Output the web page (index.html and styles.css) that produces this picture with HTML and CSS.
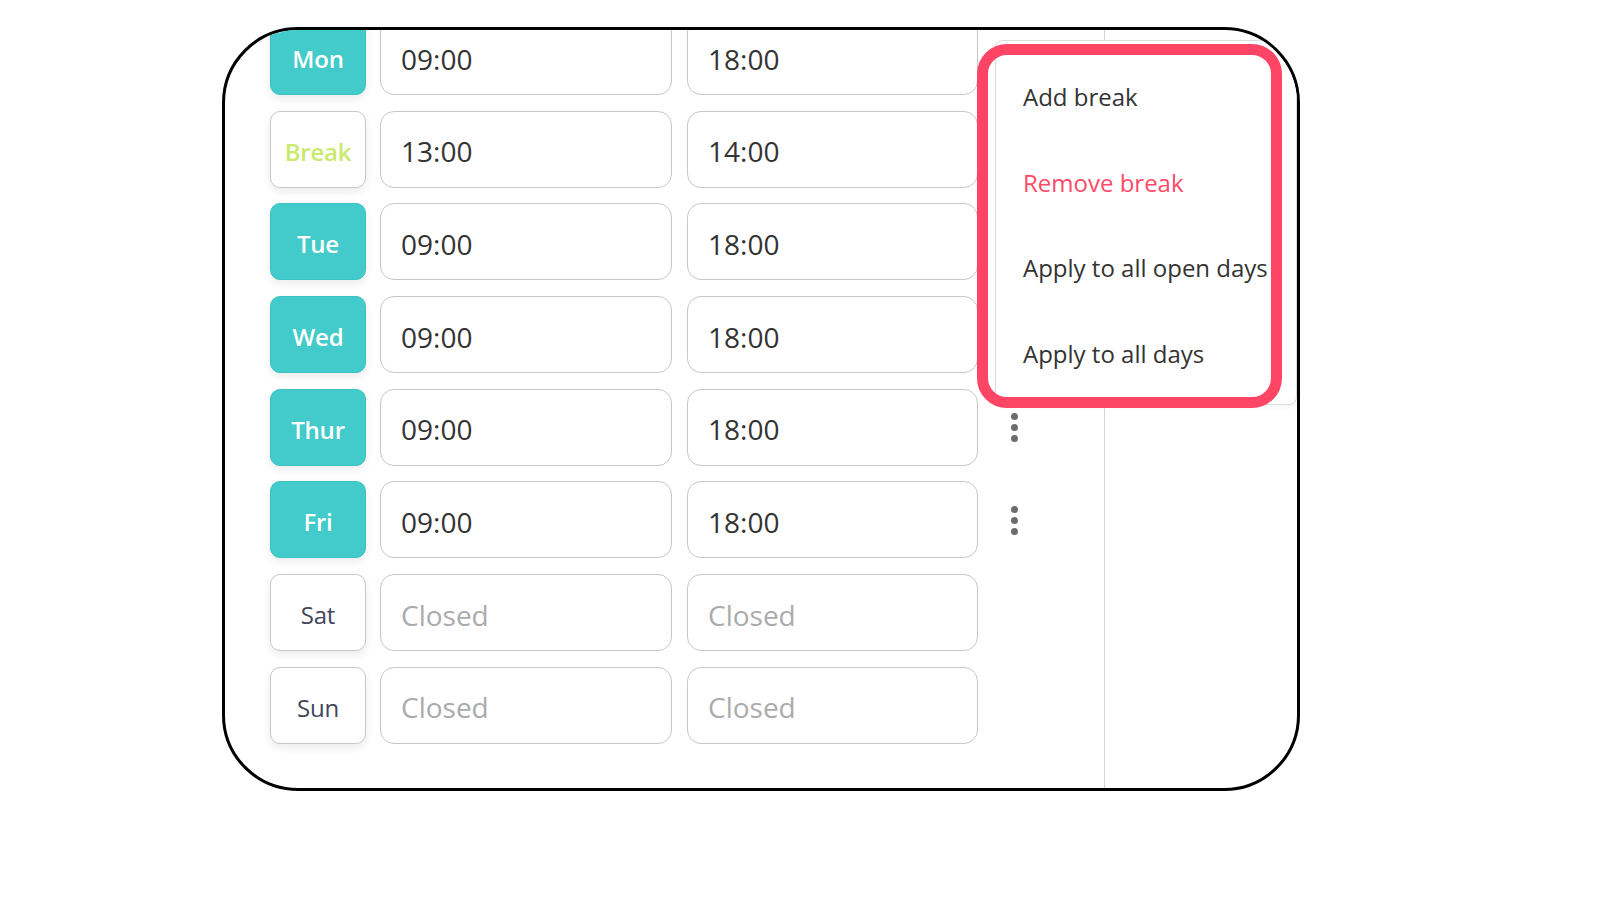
FILE: index.html
```html
<!DOCTYPE html>
<html lang="en">
<head>
<meta charset="utf-8">
<title>Opening hours</title>
<link rel="stylesheet" href="styles.css">
</head>
<body>
<div class="page">
  <div class="frame">
    <div class="schedule">
      <div class="row">
        <div class="chip chip-open">Mon</div>
        <div class="field">09:00</div>
        <div class="field field-end">18:00</div>
        <div class="kebab"><i></i><i></i><i></i></div>
      </div>
      <div class="row">
        <div class="chip chip-break">Break</div>
        <div class="field">13:00</div>
        <div class="field field-end">14:00</div>
      </div>
      <div class="row">
        <div class="chip chip-open">Tue</div>
        <div class="field">09:00</div>
        <div class="field field-end">18:00</div>
        <div class="kebab"><i></i><i></i><i></i></div>
      </div>
      <div class="row">
        <div class="chip chip-open">Wed</div>
        <div class="field">09:00</div>
        <div class="field field-end">18:00</div>
        <div class="kebab"><i></i><i></i><i></i></div>
      </div>
      <div class="row">
        <div class="chip chip-open">Thur</div>
        <div class="field">09:00</div>
        <div class="field field-end">18:00</div>
        <div class="kebab"><i></i><i></i><i></i></div>
      </div>
      <div class="row">
        <div class="chip chip-open">Fri</div>
        <div class="field">09:00</div>
        <div class="field field-end">18:00</div>
        <div class="kebab"><i></i><i></i><i></i></div>
      </div>
      <div class="row">
        <div class="chip chip-closed">Sat</div>
        <div class="field field-muted">Closed</div>
        <div class="field field-end field-muted">Closed</div>
      </div>
      <div class="row">
        <div class="chip chip-closed">Sun</div>
        <div class="field field-muted">Closed</div>
        <div class="field field-end field-muted">Closed</div>
      </div>
    </div>
    <div class="divider"></div>
    <div class="side"></div>

    <div class="menu">
      <div class="menu-item">Add break</div>
      <div class="menu-item menu-danger">Remove break</div>
      <div class="menu-item">Apply to all open days</div>
      <div class="menu-item">Apply to all days</div>
    </div>
    <div class="highlight"></div>
  </div>
</div>
</body>
</html>
```

FILE: styles.css
```css
html, body {
  margin: 0;
  padding: 0;
  background: #ffffff;
}

body {
  font-family: "Open Sans", "Liberation Sans", sans-serif;
  color: #333333;
}

.page {
  padding: 27px 0 0 222px;
}

.frame {
  position: relative;
  box-sizing: border-box;
  width: 1078px;
  height: 764px;
  border: 3px solid #000000;
  border-radius: 76px;
  overflow: hidden;
  display: flex;
  background: #ffffff;
}

.schedule {
  box-sizing: border-box;
  width: 879px;
  flex: none;
  padding-left: 45px;
  margin-top: -12px;
  display: flex;
  flex-direction: column;
  gap: 15.7px;
}

.row {
  display: flex;
  align-items: center;
  height: 77px;
  flex: none;
}

.chip {
  box-sizing: border-box;
  width: 96px;
  height: 77px;
  flex: none;
  border-radius: 10px;
  display: flex;
  align-items: center;
  justify-content: center;
  padding-top: 4px;
  font-size: 24px;
  font-weight: 600;
  letter-spacing: -0.2px;
  box-shadow: 0 4px 9px rgba(0, 0, 0, 0.08);
}

.chip-open {
  background: #42cbca;
  border: 1.5px solid #3dc2c1;
  color: #ffffff;
}

.chip-break {
  background: #ffffff;
  border: 1.5px solid #c7c7ce;
  color: #c9ea6c;
}

.chip-closed {
  background: #ffffff;
  border: 1.5px solid #c7c7ce;
  color: #44455a;
  font-weight: 500;
}

.field {
  box-sizing: border-box;
  width: 292px;
  height: 77px;
  flex: none;
  margin-left: 14px;
  border: 1.5px solid #c6c6cd;
  border-radius: 14px;
  display: flex;
  align-items: center;
  padding: 4px 0 0 20px;
  font-size: 28px;
  font-weight: 500;
  color: #333333;
  background: #ffffff;
}

.field-end {
  width: 291px;
  margin-left: 15px;
}

.field-muted {
  color: #ababab;
  font-weight: 400;
}

.kebab {
  margin-left: 33px;
  display: flex;
  flex-direction: column;
  gap: 4px;
  padding-top: 1px;
}

.kebab i {
  display: block;
  width: 7px;
  height: 7px;
  border-radius: 50%;
  background: #6c6c6c;
}

.divider {
  width: 1px;
  flex: none;
  background: #d3d3d3;
}

.side {
  flex: 1;
}

.menu {
  position: absolute;
  left: 770px;
  top: 10px;
  right: 0;
  height: 365px;
  box-sizing: border-box;
  background: #ffffff;
  border: 1px solid #dcdcdc;
  border-radius: 8px;
  padding-top: 13px;
  box-shadow: 0 2px 6px rgba(0, 0, 0, 0.04);
  overflow: hidden;
}

.menu-item {
  height: 85.5px;
  display: flex;
  align-items: center;
  padding-left: 27px;
  font-size: 24px;
  font-weight: 500;
  color: #333333;
  white-space: nowrap;
}

.menu-danger {
  color: #ff4a68;
}

.highlight {
  position: absolute;
  left: 752px;
  top: 14px;
  width: 305px;
  height: 364px;
  box-sizing: border-box;
  border: 11px solid #ff4565;
  border-radius: 30px;
  pointer-events: none;
}
```
